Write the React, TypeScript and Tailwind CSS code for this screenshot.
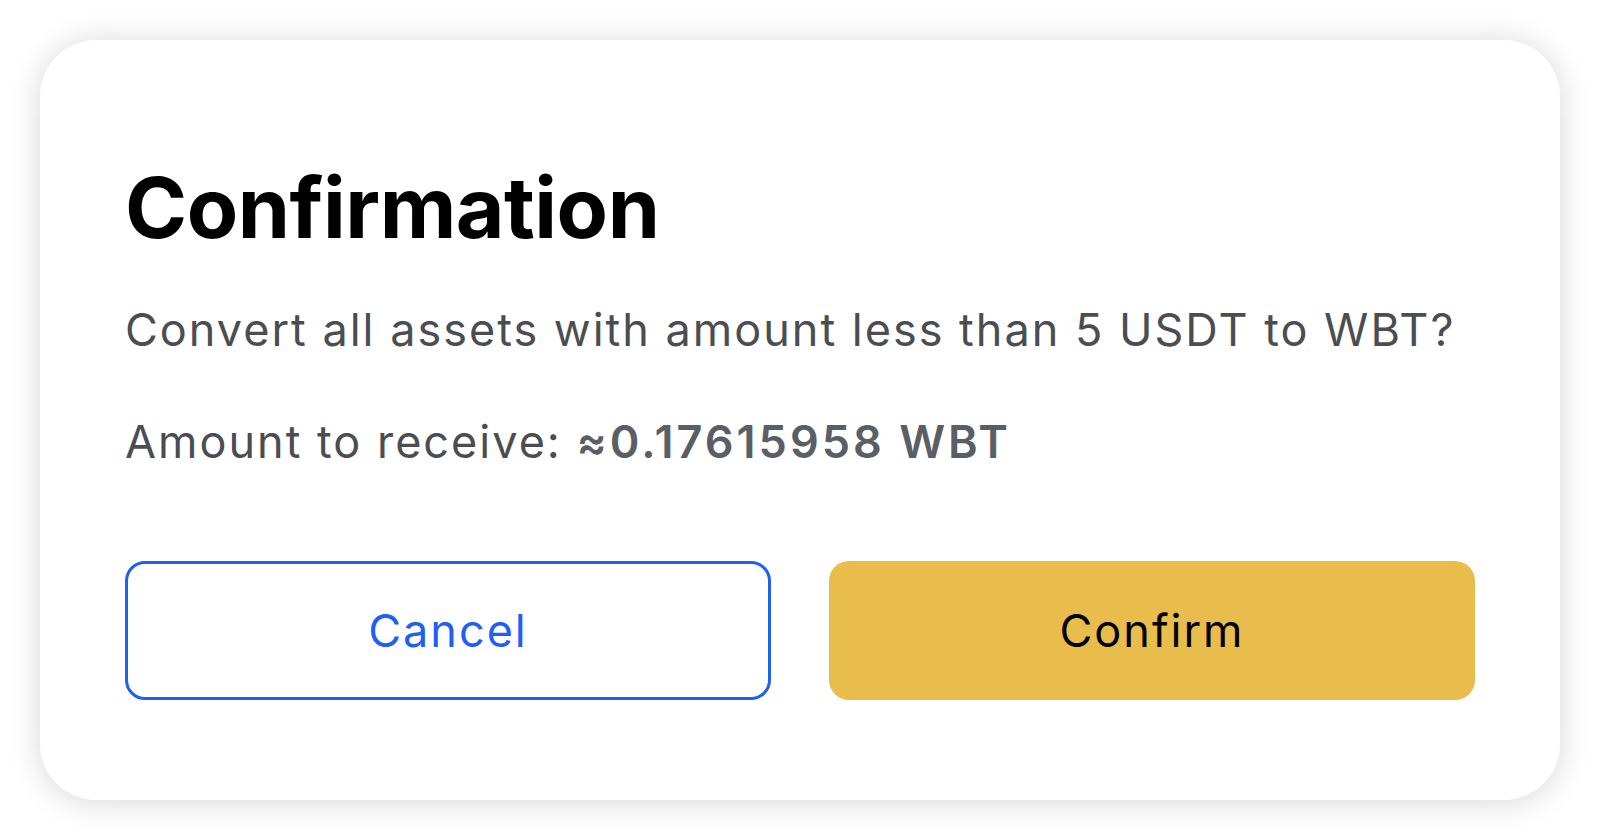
import React from "react"

export default function App() {
  return (
    <div className="min-h-[840px] w-full bg-white p-10" style={{ fontFamily: "Inter, 'Noto Sans', sans-serif" }}>
      <div className="h-[760px] w-[1520px] rounded-[56px] bg-white px-[85px] pt-[126px] shadow-[0_2px_32px_rgba(0,0,0,0.16)]">
        <h1 className="text-[84px] font-bold leading-none tracking-[-0.5px] text-black">Confirmation</h1>
        <p className="mt-[48px] text-[45px] leading-[63px] tracking-[2px] text-[#4b4d52]">
          Convert all assets with amount less than 5 USDT to WBT?
        </p>
        <p className="mt-[49px] text-[45px] leading-[63px] tracking-[2px] text-[#4b4d52]">
          Amount to receive: <span className="font-semibold tracking-[3px] text-[#5a5f67]">≈0.17615958 WBT</span>
        </p>
        <div className="mt-[88px] grid grid-cols-2 gap-[58px]">
          <button className="h-[139px] rounded-[20px] border-[3px] border-[#1f5ff2] bg-white text-[45px] tracking-[2px] text-[#1f5ff2]">
            Cancel
          </button>
          <button className="h-[139px] rounded-[20px] bg-[#e9bd4b] text-[45px] tracking-[2px] text-black">Confirm</button>
        </div>
      </div>
    </div>
  )
}
